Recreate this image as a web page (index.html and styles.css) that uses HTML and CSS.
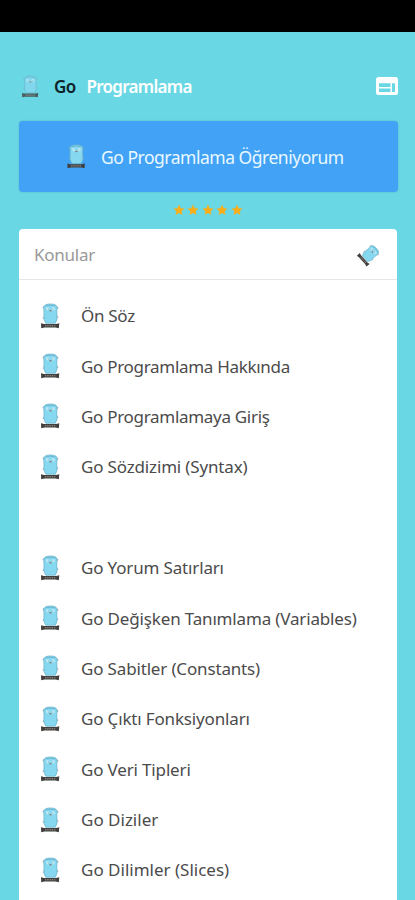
FILE: index.html
```
<!DOCTYPE html>
<html lang="tr">
<head>
    <meta charset="UTF-8">
    <title>Go Programlama</title>
    <link rel="stylesheet" href="styles.css">
</head>
<body>
    <svg class="defs" width="0" height="0">
        <symbol id="gopher" viewBox="0 0 20 26">
            <path d="M4 3.5 L3 4 L3.5 5.5 M16.5 4 L18 4.5 L17 6 M4 14 L3 16 M17 13 L18 15" fill="none" stroke="#8fa5a9" stroke-width=".9"/>
            <path d="M3.8 4 Q4.5 1 10.5 1 Q16.5 1 17 4 L16.8 10 Q18 17 15.3 20.2 H5.8 Q3 17 4 10 Z" fill="#86d8f1" stroke="#6fb4ca" stroke-width=".8"/>
            <path d="M5.5 3 Q10 1.2 15.5 3" fill="none" stroke="#68b2cb" stroke-width=".9"/>
            <circle cx="7.6" cy="5.8" r="1.7" fill="#b9e7f4"/>
            <circle cx="13.2" cy="5.8" r="1.7" fill="#b9e7f4"/>
            <circle cx="8.3" cy="6" r=".4" fill="#5b7b86"/>
            <circle cx="12.5" cy="6" r=".4" fill="#5b7b86"/>
            <ellipse cx="10.5" cy="7.8" rx="1.2" ry=".8" fill="#84766b"/>
            <path d="M1 20.3 L4 21 H16 L19.3 20.3 L18.8 25.2 L15.5 24.5 H4.5 L1.2 25.2 Z" fill="#41403e"/>
            <path d="M5 22.8 H15.5" stroke="#a59c94" stroke-width="1" stroke-dasharray="1.4 .8"/>
        </symbol>
        <symbol id="star" viewBox="0 0 24 24">
            <path d="M12 1 L15.3 8.3 L23 9.1 L17.2 14.4 L18.9 22 L12 18 L5.1 22 L6.8 14.4 L1 9.1 L8.7 8.3 Z" fill="#fbae17"/>
        </symbol>
    </svg>

    <div class="status"></div>
    <header class="topbar">
        <svg class="logo"><use href="#gopher"/></svg>
        <h1><b>Go</b><span>Programlama</span></h1>
        <svg class="web" viewBox="0 0 22 18">
            <rect width="22" height="18" rx="2.5" fill="#fff"/>
            <path d="M3 6.2 H14.5 V10 H3 Z M3 11.4 H14.5 V15 H3 Z M16 6.2 H19 V15 H16 Z" fill="#69d7e4"/>
        </svg>
    </header>

    <div class="banner">
        <svg><use href="#gopher"/></svg>
        <span>Go Programlama Öğreniyorum</span>
    </div>
    <div class="stars">
        <svg><use href="#star"/></svg>
        <svg><use href="#star"/></svg>
        <svg><use href="#star"/></svg>
        <svg><use href="#star"/></svg>
        <svg><use href="#star"/></svg>
    </div>

    <div class="card">
        <div class="card-head">
            <span>Konular</span>
            <svg><use href="#gopher"/></svg>
        </div>
        <ul>
            <li><svg><use href="#gopher"/></svg><span class="tight">Ön Söz</span></li>
            <li><svg><use href="#gopher"/></svg><span class="tight">Go Programlama Hakkında</span></li>
            <li><svg><use href="#gopher"/></svg><span class="tight">Go Programlamaya Giriş</span></li>
            <li><svg><use href="#gopher"/></svg><span>Go Sözdizimi (Syntax)</span></li>
            <li></li>
            <li><svg><use href="#gopher"/></svg><span>Go Yorum Satırları</span></li>
            <li><svg><use href="#gopher"/></svg><span>Go Değişken Tanımlama (Variables)</span></li>
            <li><svg><use href="#gopher"/></svg><span>Go Sabitler (Constants)</span></li>
            <li><svg><use href="#gopher"/></svg><span>Go Çıktı Fonksiyonları</span></li>
            <li><svg><use href="#gopher"/></svg><span>Go Veri Tipleri</span></li>
            <li><svg><use href="#gopher"/></svg><span class="wide">Go Diziler</span></li>
            <li><svg><use href="#gopher"/></svg><span class="wide">Go Dilimler (Slices)</span></li>
        </ul>
    </div>
</body>
</html>
```
FILE: styles.css
```
* {
    margin: 0;
    padding: 0;
    box-sizing: border-box;
}
body {
    height: 900px;
    overflow: hidden;
    background: #69d7e4;
    font-family: "Noto Sans", sans-serif;
    font-size: 17px;
}
.defs {
    position: absolute;
}
.status {
    height: 32px;
    background: #000;
}
.topbar {
    display: flex;
    align-items: center;
    height: 89px;
    padding: 19px 17px 0 20px;
}
.logo {
    width: 20px;
    height: 23px;
    opacity: .8;
}
.topbar h1 {
    flex: 1;
    margin-left: 14px;
    font-size: 17px;
    font-weight: 600;
    letter-spacing: -.7px;
}
.topbar b {
    margin-right: 11px;
    font-weight: 600;
    color: #0c2227;
}
.topbar span {
    color: #fff;
}
.web {
    width: 22px;
    height: 18px;
}
.banner {
    display: flex;
    align-items: center;
    height: 71px;
    margin: 0 17px 0 19px;
    padding-left: 47px;
    border-radius: 4px;
    background: #42a3f6;
    color: #e9f8ff;
    font-size: 17.5px;
    letter-spacing: -.48px;
    box-shadow: 0 0 2px rgba(30, 110, 160, .35);
}
.banner svg {
    width: 20px;
    height: 25px;
    margin-right: 15px;
}
.stars {
    display: flex;
    justify-content: center;
    gap: 2.5px;
    height: 37px;
    padding-top: 11.5px;
}
.stars svg {
    width: 12px;
    height: 12px;
}
.card {
    height: 700px;
    margin: 0 18px 0 19px;
    border-radius: 4px 4px 0 0;
    background: #fff;
}
.card-head {
    display: flex;
    align-items: center;
    justify-content: space-between;
    height: 51px;
    padding: 0 19px 0 15px;
    border-bottom: 1px solid #e6e6e6;
    color: #999;
    letter-spacing: -.25px;
}
.card-head svg {
    width: 18px;
    height: 21px;
    transform: rotate(48deg);
}
.card ul {
    padding-top: 10.5px;
    list-style: none;
}
.card li {
    display: flex;
    align-items: center;
    height: 50.4px;
    padding-left: 21px;
    color: #4b4b4b;
    letter-spacing: -.16px;
}
.card li svg {
    width: 20px;
    height: 26px;
    margin-right: 21px;
}
.card .tight {
    letter-spacing: -.3px;
}
.card .wide {
    letter-spacing: 0;
}
```
